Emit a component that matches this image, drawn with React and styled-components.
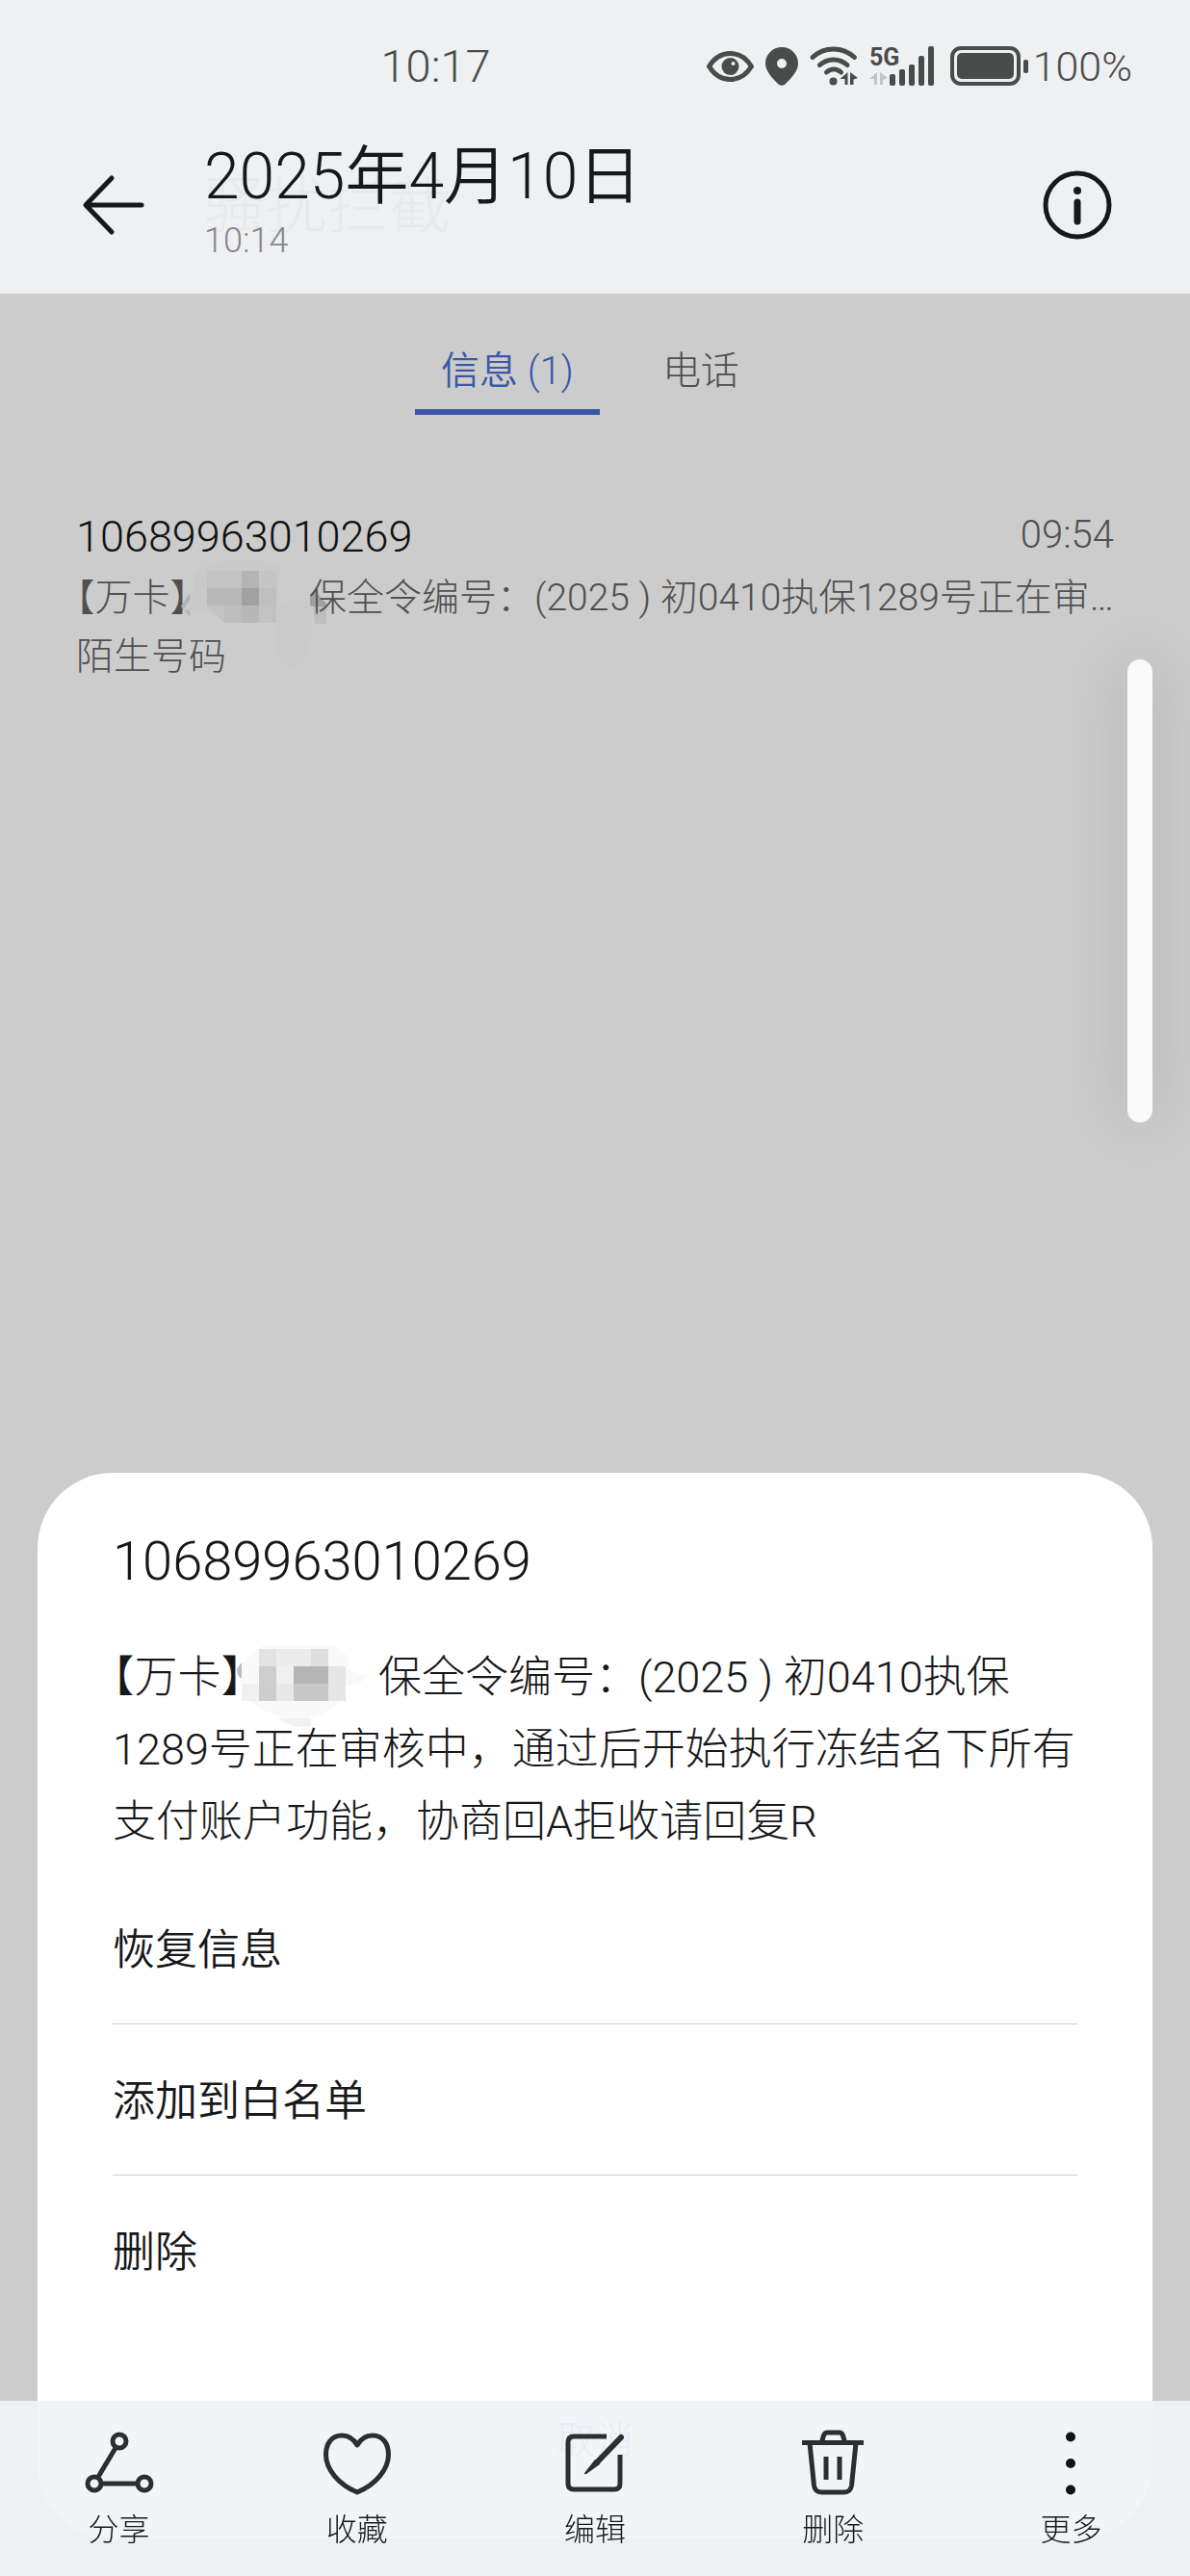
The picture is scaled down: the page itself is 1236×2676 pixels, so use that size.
import React from 'react';
import styled, { createGlobalStyle } from 'styled-components';

const GlobalStyle = createGlobalStyle`
  * {
    box-sizing: border-box;
  }

  body {
    margin: 0;
    background: #cccccc;
    color: #17181a;
    font-family: Roboto, 'Noto Sans CJK SC', sans-serif;
    font-weight: 300;
  }

  button {
    padding: 0;
    border: 0;
    background: none;
    color: inherit;
    font: inherit;
    cursor: pointer;
  }

  h1, h2, p, ul {
    margin: 0;
    padding: 0;
    font-weight: 300;
    list-style: none;
  }

  svg {
    display: block;
    flex: none;
    overflow: visible;
  }
`;

const Screen = styled.div`
  position: relative;
  display: flex;
  flex-direction: column;
  min-height: 100vh;
  background: #cccccc;
`;

/* header */

const Header = styled.header`
  background: #eff0f2;
`;

const StatusBar = styled.div`
  display: flex;
  align-items: center;
  height: 120px;
  padding: 17px 60px 0 32%;
  color: #4a4c4b;
  font-size: 47px;
`;

const StatusIcons = styled.div`
  display: flex;
  align-items: center;
  gap: 12px;
  margin-left: auto;
`;

const Battery = styled.div`
  display: flex;
  align-items: center;
  gap: 4px;
  margin-left: 4px;
  font-size: 43px;
`;

const AppBar = styled.div`
  display: flex;
  align-items: center;
  height: 185px;
  padding: 0 79px 0 81px;
`;

const IconButton = styled.button`
  width: 76px;
  height: 76px;
`;

const Heading = styled.div`
  position: relative;
  flex: 1;
  margin-left: 55px;
  padding-bottom: 6px;
`;

const Title = styled.h1`
  position: relative;
  font-size: 66px;
  font-weight: 350;
  line-height: 80px;
`;

const Subtitle = styled.p`
  position: relative;
  color: #85878a;
  font-size: 36px;
  line-height: 52px;
`;

// title of the page below, showing through the bar
const GhostTitle = styled.span`
  position: absolute;
  top: 26px;
  left: 0;
  color: #e8e9eb;
  font-size: 64px;
  line-height: 90px;
`;

/* blocked messages */

const Tabs = styled.nav`
  display: flex;
  justify-content: center;
  gap: 28px;
  padding-top: 46px;
`;

const Tab = styled.button`
  min-width: 154px;
  height: 80px;
  padding: 0 27px 4px;
  border-bottom: 6px solid ${(props) => (props.$active ? '#3b57a6' : 'transparent')};
  color: ${(props) => (props.$active ? '#3b57a6' : '#505050')};
  font-size: 40px;
  font-weight: ${(props) => (props.$active ? 350 : 300)};
  line-height: 64px;
`;

const Message = styled.article`
  display: flex;
  flex-direction: column;
  margin: 96px 79px 0;
  color: #505050;
  font-size: 39px;
  line-height: 61px;
`;

const MessageTop = styled.div`
  display: flex;
  justify-content: space-between;
  margin-bottom: 3px;
`;

const Sender = styled.h2`
  color: #111111;
  font-size: 45px;
  font-weight: 350;
  line-height: 61px;
`;

const ReceivedAt = styled.time`
  font-size: 40px;
  line-height: 58px;
`;

const Preview = styled.p`
  white-space: nowrap;
`;

// signature in half-width lenticular brackets
const Signature = styled.span`
  font-feature-settings: 'halt';
`;

const Mosaic = styled.svg`
  display: inline-block;
  width: ${(props) => props.$width}px;
  height: 36px;
  vertical-align: baseline;
`;

const ScrollThumb = styled.div`
  position: absolute;
  top: 685px;
  right: 39px;
  width: 26px;
  height: 481px;
  border-radius: 13px;
  background: #fafafa;
  box-shadow: 0 0 64px rgba(0, 0, 0, 0.16);
`;

/* sheet */

const Sheet = styled.section`
  margin: auto 39px 39px;
  padding: 57px 78px 25px;
  border-radius: 78px;
  background: #ffffff;
`;

const SheetTitle = styled.h2`
  font-size: 56px;
  font-weight: 350;
  line-height: 70px;
`;

const SheetText = styled.p`
  margin: 48px -18px 16px 0;
  font-size: 45px;
  line-height: 75px;
`;

const Option = styled.li`
  border-bottom: 1px solid ${(props) => (props.$last ? 'transparent' : '#cccccc')};
`;

const OptionButton = styled.button`
  width: 100%;
  height: 156px;
  padding-bottom: 4px;
  font-size: 44px;
  font-weight: 350;
  text-align: left;
`;

const CancelButton = styled.button`
  width: 100%;
  height: 157px;
  margin-top: 38px;
  padding-bottom: 4px;
  color: #7482f0;
  font-size: 40px;
`;

/* bottom bar */

const Toolbar = styled.nav`
  position: fixed;
  right: 0;
  bottom: 0;
  left: 0;
  display: grid;
  grid-template-columns: repeat(5, 1fr);
  height: 182px;
  padding-top: 28px;
  background: rgba(242, 243, 245, 0.92);
`;

const Tool = styled.button`
  display: flex;
  flex-direction: column;
  align-items: center;
  gap: 12px;
  color: #17181a;
  font-size: 32px;
  line-height: 44px;
`;

const ToolIcon = styled.svg`
  width: 72px;
  height: 72px;
  fill: none;
  stroke: #2c2e30;
  stroke-width: 5;
  stroke-linejoin: round;
`;

const tools = [
  {
    label: '分享',
    icon: (
      <>
        <circle cx="36" cy="14" r="7" />
        <circle cx="10" cy="58" r="7" />
        <circle cx="62" cy="58" r="7" />
        <path d="M14 51 32 21M18 58h36" />
      </>
    ),
  },
  {
    label: '收藏',
    icon: (
      <path d="M36 18C32 11 27 8 20 8 9 8 3.500 17 3.500 28c0 15 13 31 32.500 39 19.500-8 32.500-24 32.500-39C68.500 17 63 8 52 8c-7 0-12 3-16 10Z" />
    ),
  },
  {
    label: '编辑',
    icon: (
      <>
        <path d="M48 9H14q-6 0-6 6v43q0 6 6 6h42q6 0 6-6V28" />
        <path d="M63 10 38 36" strokeWidth="6" strokeLinecap="round" />
        <path d="M36 33 25 47q0 2 2 1L41 38Z" fill="#2c2e30" stroke="none" />
      </>
    ),
  },
  {
    label: '删除',
    icon: (
      <>
        <path d="M4 15.500h64M24.500 15l2-7q1-3 4-3h12q3 0 4 3l2 7" />
        <path d="M12 16l4.500 44q1 7 8 7h23q7 0 8-7L60 16M29 30v24M43 30v24" />
      </>
    ),
  },
  {
    label: '更多',
    icon: (
      <g fill="#111214" stroke="none">
        <circle cx="36" cy="9.500" r="5" />
        <circle cx="36" cy="37" r="5" />
        <circle cx="36" cy="64.500" r="5" />
      </g>
    ),
  },
];

const options = ['恢复信息', '添加到白名单', '删除'];

function StatusGlyphs() {
  return (
    <>
      <svg width="49" height="32" viewBox="0 0 49 32" fill="none">
        <path
          d="M2.500 16C8 7 16 2.500 24.500 2.500S41 7 46.500 16C41 25 33 29.500 24.500 29.500S8 25 2.500 16Z"
          stroke="#4a4c4b"
          strokeWidth="5"
          strokeLinejoin="round"
        />
        <circle cx="24.500" cy="16" r="9" fill="#4a4c4b" />
        <circle cx="27.500" cy="13" r="2" fill="#eff0f2" />
      </svg>
      <svg width="34" height="40" viewBox="0 0 34 40" fill="#4a4c4b">
        <path
          fillRule="evenodd"
          d="M17 0C7.500 0 0 7.500 0 17c0 8 7 15 13.500 21.500q3.500 2.500 7 0C27 32 34 25 34 17 34 7.500 26.500 0 17 0Zm0 12a5 5 0 1 1 0 10 5 5 0 0 1 0-10Z"
        />
      </svg>
      <svg width="50" height="41" viewBox="0 0 50 41" fill="none" stroke="#4a4c4b" strokeWidth="5" strokeLinecap="round">
        <path d="M3 11.500C15 0 34 0 46.500 11.500M10.500 19.500c8.500-7.500 20-7.500 28.500 0M17.500 27c4.500-4 10.500-4 15 0" />
        <circle cx="24.500" cy="36.500" r="4" fill="#4a4c4b" stroke="none" />
        <path d="M39.500 27v13h-3v-6h-5ZM42 27l8 6-4.500 1.500V40H42Z" fill="#4a4c4b" stroke="none" />
      </svg>
      <svg width="68" height="41" viewBox="0 0 68 41" fill="#4a4c4b">
        <text x="0" y="20" fontFamily="Roboto, sans-serif" fontSize="25" fontWeight="700">5G</text>
        <path d="M8 27v13H5v-6H0ZM11 27l8 6-5 2v5h-3Z" fill="#c3c4c5" />
        <rect x="21" y="29" width="6" height="12" rx="2" />
        <rect x="31" y="24" width="6" height="17" rx="2" />
        <rect x="41" y="19" width="6" height="22" rx="2" />
        <rect x="51" y="10" width="6" height="31" rx="2" />
        <rect x="61" y="0" width="6" height="41" rx="2" />
      </svg>
    </>
  );
}

function PreviewMosaic() {
  return (
    <Mosaic $width={125} viewBox="0 -4 125 36">
      <path d="M1 14-8 28l9 10Z" fill="#b0b0b0" />
      <path d="M-6 32 6 13V-2q0-8 12-12l20-6h34l22 8v16l-8 34-44 5-26-10Z" fill="#c9c9c9" />
      <rect x="19" y="-9" width="36" height="18" fill="#c3c3c3" />
      <rect x="55" y="-9" width="18" height="18" fill="#b4b4b4" />
      <rect x="73" y="-9" width="18" height="18" fill="#c5c5c5" />
      <rect x="19" y="9" width="36" height="18" fill="#b9b9b9" />
      <rect x="55" y="9" width="18" height="18" fill="#a1a1a1" />
      <rect x="73" y="9" width="18" height="18" fill="#bfbfbf" />
      <path d="M19 27h18v18Z" fill="#c2c2c2" />
      <rect x="37" y="27" width="18" height="18" fill="#bebebe" />
      <rect x="55" y="27" width="18" height="18" fill="#b8b8b8" />
      <rect x="73" y="27" width="18" height="18" fill="#c2c2c2" />
      <path d="M126 28V16l6-3 11 12v3Z" fill="#a0a0a0" />
      <path d="M129 28h14v18h-12Z" fill="#bebebe" />
      <path d="M96 27q15-12 31 0 4 40-10 62-14 6-21-4-12-30 0-58Z" fill="#cacaca" />
    </Mosaic>
  );
}

function SheetMosaic() {
  return (
    <Mosaic $width={141} viewBox="0 0 141 36">
      <path d="M-6 14q0-9 9-12l10-9q10-8 26-6l55 0 16 12v14l18 6-6 8-16 2q-4 30-48 36Q20 60 2 40Z" fill="#f9f9f9" />
      <path d="M-1 5-6 12q0 7 5 10Z" fill="#bdbdbd" />
      <path d="M0 27h17v18H-1Z" fill="#f0f0f0" />
      <rect x="17" y="-9" width="18" height="18" fill="#e3e3e3" />
      <rect x="35" y="-9" width="36" height="18" fill="#ececec" />
      <rect x="71" y="-9" width="18" height="18" fill="#dedede" />
      <rect x="17" y="9" width="18" height="18" fill="#cecece" />
      <rect x="35" y="9" width="18" height="18" fill="#f0f0f0" />
      <rect x="53" y="9" width="36" height="18" fill="#b5b5b5" />
      <rect x="89" y="9" width="18" height="18" fill="#e6e6e6" />
      <rect x="17" y="27" width="18" height="18" fill="#cdcdcd" />
      <rect x="35" y="27" width="18" height="18" fill="#e8e8e8" />
      <rect x="53" y="27" width="36" height="18" fill="#c7c7c7" />
      <rect x="89" y="27" width="18" height="18" fill="#e6e6e6" />
      <path d="M37 63h34v8q-18 4-34-8Z" fill="#f2f2f2" />
    </Mosaic>
  );
}

function App() {
  return (
    <Screen lang="zh-CN">
      <GlobalStyle />
      <Header>
        <StatusBar>
          <span>10:17</span>
          <StatusIcons>
            <StatusGlyphs />
            <Battery>
              <svg width="82" height="41" viewBox="0 0 82 41" fill="#4a4c4b">
                <rect x="2" y="2" width="69" height="37" rx="9" fill="none" stroke="#4a4c4b" strokeWidth="4" />
                <rect x="7" y="7" width="59" height="27" rx="5" />
                <rect x="76" y="14" width="5" height="14" rx="2" />
              </svg>
              <span>100%</span>
            </Battery>
          </StatusIcons>
        </StatusBar>
        <AppBar>
          <IconButton aria-label="返回">
            <svg width="76" height="76" viewBox="0 0 76 76" fill="none" stroke="#17181a" strokeWidth="5" strokeLinecap="round" strokeLinejoin="round">
              <path d="M35 10 8 38l27 28M9 38h57" />
            </svg>
          </IconButton>
          <Heading>
            <GhostTitle aria-hidden="true">骚扰拦截</GhostTitle>
            <Title>2025年4月10日</Title>
            <Subtitle>10:14</Subtitle>
          </Heading>
          <IconButton aria-label="详情">
            <svg width="76" height="76" viewBox="0 0 76 76" fill="none" stroke="#17181a" strokeWidth="5">
              <circle cx="38" cy="38" r="33" />
              <circle cx="38" cy="23" r="4" fill="#17181a" stroke="none" />
              <path d="M38 35v20" strokeWidth="7" strokeLinecap="round" />
            </svg>
          </IconButton>
        </AppBar>
      </Header>

      <Tabs>
        <Tab $active>信息 (1)</Tab>
        <Tab>电话</Tab>
      </Tabs>

      <Message>
        <MessageTop>
          <Sender>10689963010269</Sender>
          <ReceivedAt>09:54</ReceivedAt>
        </MessageTop>
        <Preview>
          <Signature>【万卡】</Signature>
          <PreviewMosaic />
          保全令编号：(2025 ) 初0410执保1289号正在审…
        </Preview>
        <p>陌生号码</p>
      </Message>
      <ScrollThumb />

      <Sheet>
        <SheetTitle>10689963010269</SheetTitle>
        <SheetText>
          <Signature>【万卡】</Signature>
          <SheetMosaic />
          保全令编号：(2025 ) 初0410执保1289号正在审核中，通过后开始执行冻结名下所有支付账户功能，协商回A拒收请回复R
        </SheetText>
        <ul>
          {options.map((option, i) => (
            <Option key={option} $last={i === options.length - 1}>
              <OptionButton>{option}</OptionButton>
            </Option>
          ))}
        </ul>
        <CancelButton>取消</CancelButton>
      </Sheet>

      <Toolbar>
        {tools.map(({ label, icon }) => (
          <Tool key={label}>
            <ToolIcon viewBox="0 0 72 72">{icon}</ToolIcon>
            {label}
          </Tool>
        ))}
      </Toolbar>
    </Screen>
  );
}

export default App;
